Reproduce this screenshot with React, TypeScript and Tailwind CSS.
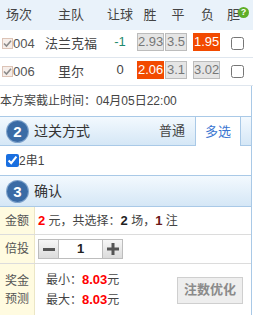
const odds = [
	{ no: "004", team: "法兰克福", handicap: "-1", hcColor: "text-[#1f8a6e]", values: ["2.93", "3.5", "1.95"], picked: 2 },
	{ no: "006", team: "里尔", handicap: "0", hcColor: "text-[#444]", values: ["2.06", "3.1", "3.02"], picked: 0 },
]

function LockedCheck() {
	return (
		<span className="w-[11px] h-[11px] border border-[#dcc3b6] bg-[#f6eeea] flex items-center justify-center">
			<svg width="9" height="9" viewBox="0 0 9 9">
				<path d="M1 4.5 L3.5 7 L8 1.8" fill="none" stroke="#8a8a8a" strokeWidth="1.6" />
			</svg>
		</span>
	)
}

function StepNo({ n }: { n: number }) {
	return (
		<span className="w-[21px] h-[21px] rounded-full bg-[#3a6ba5] ring-1 ring-[#7fa3cc] text-white font-bold text-[15px] leading-none flex items-center justify-center">
			{n}
		</span>
	)
}

export default function App() {
	return (
		<div className="w-[253px] h-[315px] overflow-hidden bg-white text-[#333] text-[12px] font-['Liberation_Sans','Noto_Sans_CJK_SC',sans-serif]">
			{/* match table */}
			<div className="grid grid-cols-[38px_66px_32px_28px_28px_28px_33px] h-[30px] items-center bg-[#e9f2fa] text-[13px] text-[#444]">
				<span className="text-center">场次</span>
				<span className="text-center">主队</span>
				<span className="text-center">让球</span>
				<span className="text-center">胜</span>
				<span className="text-center">平</span>
				<span className="text-center pl-[3px]">负</span>
				<span className="relative pl-[7px]">
					胆
					<span className="absolute left-[18px] top-[2px] w-[11px] h-[11px] rounded-full bg-[#5eae28] text-white text-[9px] font-bold leading-none flex items-center justify-center">
						?
					</span>
				</span>
			</div>
			{odds.map((m) => (
				<div
					key={m.no}
					className="grid grid-cols-[38px_66px_32px_28px_28px_28px_33px] h-[28px] items-center border-b border-[#dfe6ee]"
				>
					<span className="flex items-center pl-[2px] text-[13px] text-[#555]">
						<LockedCheck />
						{m.no}
					</span>
					<span className="text-center text-[13px] text-[#444]">{m.team}</span>
					<span className={`text-center text-[13px] -mt-1 ${m.hcColor}`}>{m.handicap}</span>
					{m.values.map((v, i) => (
						<span key={i} className="pl-[1px] -mt-[3px]">
							<span
								className={
									i === m.picked
										? "inline-block min-w-[22px] text-center h-[18px] leading-[16px] text-[13px] border border-[#f24a00] bg-[#f24a00] text-white"
										: "inline-block min-w-[22px] text-center h-[18px] leading-[16px] text-[13px] border border-[#bcbcbc] bg-[#e5e5e5] text-[#777]"
								}
							>
								{v}
							</span>
						</span>
					))}
					<span className="pl-[11px] flex">
						<input type="checkbox" className="w-[13px] h-[13px] m-0" />
					</span>
				</div>
			))}

			<div className="w-[252px] border-r border-[#a9c9e7]">
				<div className="h-[30px] flex items-center text-[12px] text-[#444]">本方案截止时间：04月05日22:00</div>

				{/* step 2 */}
				<div className="h-[30px] flex items-stretch border-y border-[#a9c9e7] bg-gradient-to-b from-[#f3f9fe] to-[#d5e7f6]">
					<div className="flex items-center flex-1 pl-[7px] gap-[6px]">
						<StepNo n={2} />
						<span className="text-[14px] text-[#333]">过关方式</span>
					</div>
					<div className="w-[46px] flex items-center justify-center text-[13px] text-[#444]">普通</div>
					<div className="w-[46px] -mb-px flex items-center justify-center text-[13px] text-[#3b76d1] bg-white border-x border-[#a9c9e7]">
						多选
					</div>
					<div className="w-[10px]" />
				</div>
				<div className="h-[30px] flex items-center pl-[6px] border-b border-[#a9c9e7]">
					<input type="checkbox" defaultChecked className="w-[13px] h-[13px] m-0 accent-[#1a6fe0]" />
					<span className="text-[12px] text-[#444]">2串1</span>
				</div>

				{/* step 3 */}
				<div className="h-[31px] flex items-center pl-[7px] gap-[6px] border-b border-[#a9c9e7] bg-gradient-to-b from-[#f3f9fe] to-[#d5e7f6]">
					<StepNo n={3} />
					<span className="text-[14px] text-[#333]">确认</span>
				</div>

				<div className="flex h-[28px] border-b border-[#dcdcdc]">
					<div className="w-[35px] bg-[#fffbe0] border-r border-[#ebe6c6] flex items-center justify-center text-[12px] text-[#555]">
						金额
					</div>
					<div className="flex items-center pl-[3px] text-[12px] text-[#444]">
						<b className="text-[13px] text-[#f00]">2</b>&nbsp;元，共选择：<b className="text-[13px] text-[#222]">2</b>&nbsp;场，
						<b className="text-[13px] text-[#6a1818]">1</b>&nbsp;注
					</div>
				</div>

				<div className="flex h-[29px] border-b border-[#dcdcdc]">
					<div className="w-[35px] bg-[#fffbe0] border-r border-[#ebe6c6] flex items-center justify-center text-[12px] text-[#555]">
						倍投
					</div>
					<div className="flex items-center pl-[3px]">
						<div className="flex h-[20px] border border-[#bdbdbd]">
							<span className="w-[19px] flex items-center justify-center bg-gradient-to-b from-[#f6f6f6] to-[#dcdcdc]">
								<span className="w-[12px] h-[3px] bg-[#555]" />
							</span>
							<span className="w-[45px] border-x border-[#bdbdbd] flex items-center justify-center text-[13px] font-bold text-[#222]">
								1
							</span>
							<span className="w-[19px] flex items-center justify-center bg-gradient-to-b from-[#f6f6f6] to-[#dcdcdc]">
								<svg width="12" height="12" viewBox="0 0 12 12">
									<path d="M0 6 H12 M6 0 V12" stroke="#555" strokeWidth="3" />
								</svg>
							</span>
						</div>
					</div>
				</div>

				<div className="flex h-[52px]">
					<div className="w-[35px] bg-[#fffbe0] border-r border-[#ebe6c6] flex flex-col items-center justify-center text-[12px] leading-[18px] text-[#555]">
						<span>奖金</span>
						<span>预测</span>
					</div>
					<div className="flex-1 flex items-center justify-between pl-[11px] pr-[8px]">
						<div className="flex flex-col text-[12px] leading-[19px] text-[#444]">
							<span>
								最小：<b className="text-[13px] text-[#f00]">8.03</b>元
							</span>
							<span>
								最大：<b className="text-[13px] text-[#f00]">8.03</b>元
							</span>
						</div>
						<button className="w-[66px] h-[27px] border border-[#cfcfcf] bg-[#eeeeee] text-[13px] font-bold text-[#8a8a8a]">
							注数优化
						</button>
					</div>
				</div>
			</div>
		</div>
	)
}
